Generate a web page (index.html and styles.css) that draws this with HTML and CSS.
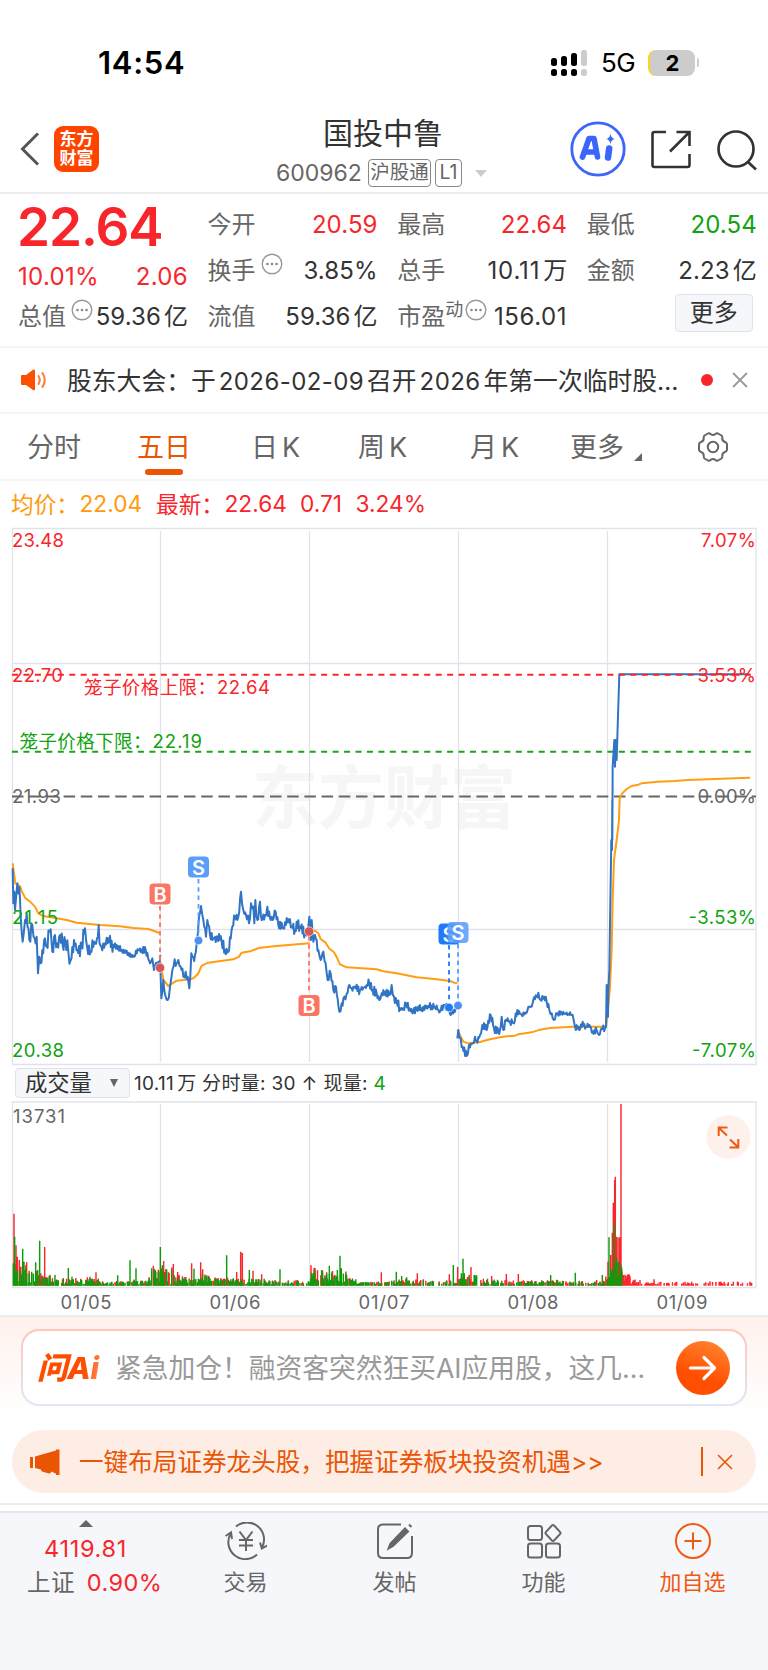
FILE: index.html
```html
<!DOCTYPE html>
<html lang="zh-CN">
<head>
  <meta charset="UTF-8" />
  <title>国投中鲁 600962</title>
  <link rel="stylesheet" href="styles.css">
</head>
<body>

  <!-- 状态栏 -->
  <div class="status-bar">
    <span class="time">14:54</span>
    <svg class="signal" width="38" height="28" viewBox="0 0 38 28">
      <g fill="#000">
        <rect x="0" y="9" width="6" height="8" rx="2.5"/><rect x="10" y="7" width="6" height="10" rx="2.5"/><rect x="20" y="4" width="6" height="13" rx="2.5"/>
        <rect x="0" y="20" width="6" height="7" rx="2.5"/><rect x="10" y="20" width="6" height="7" rx="2.5"/><rect x="20" y="20" width="6" height="7" rx="2.5"/>
      </g>
      <g fill="#ccc"><rect x="30" y="1" width="6" height="16" rx="2.5"/><rect x="30" y="20" width="6" height="7" rx="2.5"/></g>
    </svg>
    <span class="net">5G</span>
    <div class="battery">2</div>
    <div class="battery-cap"></div>
  </div>

  <!-- 顶部标题 -->
  <div class="top-header">
    <svg class="back" width="20" height="34" viewBox="0 0 20 34"><path d="M18 1.5 2.5 17 18 32.500" fill="none" stroke="#555" stroke-width="3"/></svg>
    <div class="logo">东方<br>财富</div>
    <div class="stock">
      <div class="name">国投中鲁</div>
      <div class="code"><span class="num">600962</span><span class="badge">沪股通</span><span class="badge l1">L1</span><i class="down"></i></div>
    </div>
    <svg class="ai" width="56" height="56" viewBox="0 0 56 56">
      <circle cx="28" cy="28" r="26.200" fill="none" stroke="#3a66fb" stroke-width="2.800"/>
      <path d="M12.500 36 19 17.500h5L27.500 36M16.500 31h10" fill="none" stroke="#3a66fb" stroke-width="5.600" stroke-linejoin="round" stroke-linecap="round"/>
      <path d="M39.200 27.500 38 36.500" stroke="#3a66fb" stroke-width="6.500" stroke-linecap="round"/>
      <path d="M40.500 12.500Q41 17.300 45 18 41 18.700 40.500 23.500 40 18.700 36 18 40 17.300 40.500 12.500Z" fill="#3a66fb"/>
    </svg>
    <svg class="share" width="42" height="42" viewBox="0 0 42 42" fill="none" stroke="#333" stroke-width="2.600">
      <path d="M16 3H4.500Q2.500 3 2.500 5V36Q2.500 38 4.500 38H37.500Q39.500 38 39.500 36V25M26.500 3H39.500V17M39 3.500 20 22.500"/>
    </svg>
    <svg class="search" width="42" height="42" viewBox="0 0 42 42" fill="none" stroke="#333" stroke-width="2.700">
      <circle cx="20" cy="20" r="17.500"/><path d="M32 33 40 40.500"/>
    </svg>
  </div>

  <!-- 行情数据 -->
  <div class="quote">
    <div class="col first">
      <div class="price">22.64</div>
      <div class="row chg"><span>10.01%</span><span>2.06</span></div>
      <div class="row"><span class="label">总值</span><svg class="dots" viewBox="0 0 22 22"><use href="#more"/></svg><b>59.36<em>亿</em></b></div>
    </div>
    <div class="col">
      <div class="row"><span class="label">今开</span><b class="red n">20.59</b></div>
      <div class="row"><span class="label">换手</span><svg class="dots gap" viewBox="0 0 22 22"><use href="#more"/></svg><b class="n">3.85%</b></div>
      <div class="row"><span class="label">流值</span><b>59.36<em>亿</em></b></div>
    </div>
    <div class="col">
      <div class="row"><span class="label">最高</span><b class="red n">22.64</b></div>
      <div class="row"><span class="label">总手</span><b class="lot">10.11<em>万</em></b></div>
      <div class="row"><span class="label">市盈<sup>动</sup></span><svg class="dots pe" viewBox="0 0 22 22"><use href="#more"/></svg><b class="n pe-num">156.01</b></div>
    </div>
    <div class="col">
      <div class="row"><span class="label">最低</span><b class="green n">20.54</b></div>
      <div class="row"><span class="label">金额</span><b>2.23<em>亿</em></b></div>
      <div class="row"><button class="more-btn">更多</button></div>
    </div>
  </div>

  <!-- 公告 -->
  <div class="notice">
    <svg width="26" height="22" viewBox="0 0 26 22">
      <path d="M0 7Q0 6 1 6H5L12 .8Q14 0 14 2V20Q14 22 12 21L5 16H1Q0 16 0 15Z" fill="#ff4e00"/>
      <path d="M17.500 7Q20 11 17.500 15M21.500 4Q26 11 21.500 18" fill="none" stroke="#ff7a33" stroke-width="2" stroke-linecap="round"/>
    </svg>
    <div class="notice-text">股东大会：于<i>2026-02-09</i>召开<i>2026</i>年第一次临时股…</div>
    <div class="dot"></div>
    <svg class="close" width="16" height="16" viewBox="0 0 16 16"><path d="M1 1 15 15M15 1 1 15" stroke="#999" stroke-width="1.800"/></svg>
  </div>

  <!-- 周期切换 -->
  <div class="tabs">
    <span>分时</span>
    <span class="active">五日</span>
    <span>日<i>K</i></span>
    <span>周<i>K</i></span>
    <span>月<i>K</i></span>
    <span class="more">更多</span>
    <svg width="32" height="32" viewBox="0 0 32 32" fill="none" stroke="#666" stroke-width="2">
      <path d="M11 2.500Q12.500 2 13.500 3 16 5 18.500 3 19.500 2 21 2.500L24.500 4.500Q25.500 5.500 25.300 7 25 10 28 11 29.500 11.500 30 13V19Q29.500 20.500 28 21 25 22 25.300 25 25.500 26.500 24.500 27.500L21 29.500Q19.500 30 18.500 29 16 27 13.500 29 12.500 30 11 29.500L7.500 27.500Q6.500 26.500 6.700 25 7 22 4 21 2.500 20.500 2 19V13Q2.500 11.500 4 11 7 10 6.700 7 6.500 5.500 7.500 4.500Z" stroke-linejoin="round"/>
      <circle cx="16" cy="16" r="5.200"/>
    </svg>
  </div>

  <div class="avg-line">
    <span class="orange n0">均价：</span><span class="orange n1">22.04</span>
    <span class="red n0">最新：</span><span class="red n2">22.64</span><span class="red n3">0.71</span><span class="red">3.24%</span>
  </div>

  <!-- 五日走势图 -->
  <svg class="chart" id="chart" width="768" height="540" viewBox="0 526 768 540">
    <text class="watermark" x="252" y="823" textLength="264" lengthAdjust="spacingAndGlyphs">东方财富</text>
    <g class="grid">
      <path d="M12.500 528.500H756V1064.500H12.500Z"/>
      <path d="M12 663.500H756M12 929.500H756M160.500 531V1062M309.500 531V1062M458.500 531V1062M607.500 531V1062"/>
    </g>
    <path d="M12 796.500H756" stroke="#666" stroke-width="1.800" stroke-dasharray="11.500 5.700"/>
    <path d="M12 751.800H752" stroke="#18a518" stroke-width="2" stroke-dasharray="6 5.450"/>
    <g transform="translate(0 800) scale(.33333)" fill="none" stroke-linejoin="round">
      <path id="avg" stroke="#ff9d13" stroke-width="6"/>
      <path id="price" stroke="#3274c4" stroke-width="6"/>
    </g>
    <path d="M12 674.700H752" stroke="#f8262b" stroke-width="2" stroke-dasharray="6 5.450"/>
    <g class="axis">
      <text class="red" x="12" y="547" textLength="52">23.48</text>
      <text class="red" x="12" y="681.500" textLength="51">22.70</text>
      <text class="gray" x="12" y="802.500" textLength="49">21.93</text>
      <text class="green" x="12" y="923.500" textLength="46">21.15</text>
      <text class="green" x="12" y="1057" textLength="52">20.38</text>
      <text class="red" x="701" y="547" textLength="55">7.07%</text>
      <text class="red" x="697.500" y="681.500" textLength="58.500">3.53%</text>
      <text class="gray" x="697.500" y="802.500" textLength="58.500">0.00%</text>
      <text class="green" x="688.500" y="923.500" textLength="67.500">-3.53%</text>
      <text class="green" x="692" y="1057" textLength="64">-7.07%</text>
      <text class="red" x="84" y="693.500" textLength="132">笼子价格上限：</text>
      <text class="red" x="217" y="693.500" textLength="53">22.64</text>
      <text class="green" x="19.500" y="747.500" textLength="132">笼子价格下限：</text>
      <text class="green" x="152.500" y="747.500" textLength="49.500">22.19</text>
    </g>
    <!-- 买卖点 -->
    <g class="mark buy">
      <path d="M160 906V962"/><circle cx="160" cy="967.800" r="4.700"/><rect x="149.500" y="883.500" width="21" height="21" rx="4"/><text x="160" y="901.500">B</text>
      <path d="M309 936V994"/><circle cx="309" cy="931.500" r="4.700"/><rect x="298.500" y="995" width="21" height="21" rx="4"/><text x="309" y="1013">B</text>
    </g>
    <g class="mark sell">
      <path d="M198.500 879V936"/><circle cx="198.500" cy="940.500" r="4.300"/><rect x="188" y="856.500" width="21" height="21" rx="4"/><text x="198.500" y="874.500">S</text>
      <g class="deep"><path d="M449 945V1003"/><circle cx="449" cy="1007.500" r="4.300"/><rect x="438.500" y="923.500" width="21" height="21" rx="4"/><text x="449" y="941.500">S</text></g>
      <path d="M458 944V1001"/><circle cx="458" cy="1005.500" r="4.300"/><rect class="over" x="447.500" y="922" width="21" height="21" rx="4"/><text x="458" y="940">S</text>
    </g>
  </svg>

  <!-- 成交量 -->
  <div class="vol-head">
    <div class="select">成交量<i></i></div>
    <div class="vol-info">10.11<em>万</em> 分时量: 30 ↑ 现量: <b class="green">4</b></div>
  </div>
  <svg class="volume" id="volume" width="768" height="215" viewBox="0 1100 768 215">
    <g class="grid">
      <path d="M12.500 1102H756V1287.500H12.500Z"/>
      <path d="M160.500 1104V1286M309.500 1104V1286M458.500 1104V1286M607.500 1104V1286"/>
    </g>
    <g transform="translate(0 1060) scale(.33333)" stroke-width="4.300">
      <path id="volUp" stroke="#f8262b"/>
      <path id="volDown" stroke="#0a9c0a"/>
    </g>
    <g class="axis">
      <text class="gray" x="13" y="1122.500" textLength="52">13731</text>
      <text class="gray" x="60.500" y="1308.500" textLength="51">01/05</text>
      <text class="gray" x="209.500" y="1308.500" textLength="51">01/06</text>
      <text class="gray" x="358.500" y="1308.500" textLength="51">01/07</text>
      <text class="gray" x="507.500" y="1308.500" textLength="51">01/08</text>
      <text class="gray" x="656.500" y="1308.500" textLength="51">01/09</text>
    </g>
    <circle cx="728.500" cy="1137" r="22" fill="#fef0ea"/>
    <path d="M718.700 1136V1127.500H727.500M719 1128 727 1135.500M738.300 1139V1147.500H729.500M738 1147 730 1139.500" fill="none" stroke="#f0590f" stroke-width="2"/>
  </svg>

  <!-- 问Ai -->
  <div class="ask">
    <div class="ask-box">
      <div class="ask-logo">问Ai</div>
      <div class="ask-text">紧急加仓！融资客突然狂买AI应用股，这几…</div>
      <div class="go"><svg width="30" height="26" viewBox="0 0 30 26"><path d="M2.500 13H26M16 2.500 26.500 13 16 23.500" fill="none" stroke="#fff" stroke-width="3.200" stroke-linecap="round" stroke-linejoin="round"/></svg></div>
    </div>
    <div class="banner">
      <svg width="30" height="26" viewBox="0 0 30 26" fill="#ea5504"><path d="M0 8H3V19H0ZM5 7.500 26 1.500V.5H29.500V26H26V24.500L21 22.500V23.500Q20.500 24.500 19 24.500L12 22.500Q11 22 11 20.500L5 19Z"/></svg>
      <div class="banner-text">一键布局证券龙头股，把握证券板块投资机遇&gt;&gt;</div>
      <div class="bar"></div>
      <svg class="x" width="16" height="16" viewBox="0 0 16 16"><path d="M1 1 15 15M15 1 1 15" stroke="#ea5504" stroke-width="1.600"/></svg>
    </div>
  </div>

  <!-- 底部导航 -->
  <div class="bottom-nav">
    <div class="index">
      <i class="up"></i>
      <div class="point">4119.81</div>
      <div class="pct">上证 <span>0.90%</span></div>
    </div>
    <div class="item">
      <svg width="42" height="38" viewBox="0 0 42 38" fill="none" stroke="#666" stroke-width="2">
        <path d="M11 4.500A17 17 0 0 1 37 25.500M32 32.500A17 17 0 0 1 6 11M.5 14 6 10.500 7 17M35 20.500 36.800 26.500 42 23.500"/>
        <path d="M14.500 9.500 21 18 27.500 9.500M21 18V29M14 18H28M14 23.500H28"/>
      </svg>
      <span>交易</span>
    </div>
    <div class="item">
      <svg width="38" height="38" viewBox="0 0 38 38" fill="none" stroke="#666" stroke-width="2">
        <path d="M25 2.500H7Q2 2.500 2 7.500V31Q2 36 7 36H31Q36 36 36 31V14"/>
        <path d="M29 6.500 32 9.500 17 24 12.500 26.500 14.500 21.500ZM33 2.500 35.500 5" fill="#666"/>
      </svg>
      <span>发帖</span>
    </div>
    <div class="item">
      <svg width="36" height="38" viewBox="0 0 36 38" fill="none" stroke="#666" stroke-width="2">
        <rect x="2" y="4" width="14" height="14" rx="2.500"/><rect x="2" y="21.500" width="14" height="14" rx="2.500"/><rect x="20" y="21.500" width="14" height="14" rx="2.500"/>
        <path d="M25.900 3.500Q27 2.500 28.100 3.500L34 9.900Q35 11 34 12.100L28.100 18.500Q27 19.500 25.900 18.500L20 12.100Q19 11 20 9.900Z"/>
      </svg>
      <span>功能</span>
    </div>
    <div class="item add">
      <svg width="38" height="38" viewBox="0 0 38 38" fill="none" stroke="#f0590f" stroke-width="2"><circle cx="19" cy="19" r="17"/><path d="M10.500 19H27.500M19 10.500V27.500"/></svg>
      <span>加自选</span>
    </div>
  </div>

  <!-- 三点图标 -->
  <svg class="defs" width="0" height="0">
    <symbol id="more" viewBox="0 0 22 22">
      <circle cx="11" cy="11" r="9.800" fill="none" stroke="#999" stroke-width="1.400"/>
      <circle cx="6.500" cy="11" r="1.300" fill="#888"/><circle cx="11" cy="11" r="1.300" fill="#888"/><circle cx="15.500" cy="11" r="1.300" fill="#888"/>
    </symbol>
  </svg>

  <script src="chart.js"></script>
</body>
</html>
```
FILE: styles.css
```css
* {
  box-sizing: border-box;
}

body {
  margin: 0;
  width: 768px;
  height: 1670px;
  overflow: hidden;
  font-family: Inter, 'Noto Sans CJK SC', sans-serif;
  color: #333;
  background-color: #fff;
}

i, em, b {
  font-style: normal;
  font-weight: normal;
}

svg {
  display: block;
  flex: none;
}

.red { color: #f8262b; fill: #f8262b; }
.green { color: #0fa30f; fill: #0fa30f; }
.orange { color: #ff9a0c; }
.gray { fill: #666; }

/* 状态栏 */
.status-bar {
  display: flex;
  align-items: center;
  height: 100px;
  padding: 25px 0 0 98px;
  color: #000;
}

.time {
  width: 453px;
  font-size: 31px;
  font-weight: 600;
  letter-spacing: 0.7px;
}

.net {
  width: 59px;
  padding-left: 12px;
  font-size: 26px;
  letter-spacing: -0.5px;
}

.battery {
  width: 47px;
  height: 26px;
  border-left: 2px solid #ffd21f;
  border-radius: 8px;
  background: #ccc;
  font-size: 22px;
  line-height: 26px;
  font-weight: 700;
  text-align: center;
}

.battery-cap {
  width: 2px;
  height: 9px;
  margin-left: 2px;
  background: #ccc;
  border-radius: 0 3px 3px 0;
}

/* 标题 */
.top-header {
  display: flex;
  align-items: center;
  height: 94px;
  padding-left: 20px;
  border-bottom: 2px solid #ededed;
}

.back {
  margin-top: 6px;
}

.logo {
  width: 45px;
  height: 46px;
  margin: 6px 0 0 14px;
  padding-top: 4px;
  border-radius: 9px;
  background: #ff4400;
  color: #fff;
  font-size: 17px;
  line-height: 19px;
  font-weight: 700;
  text-align: center;
}

.stock {
  width: 343px;
  margin-left: 103px;
  padding: 8px 0 0 73px;
}

.name {
  padding-left: 48px;
  font-size: 30px;
  line-height: 42px;
  white-space: nowrap;
}

.code {
  display: flex;
  align-items: center;
  height: 30px;
  margin-top: 4px;
  color: #666;
  font-size: 23px;
}

.code .num {
  width: 93px;
  padding-left: 1px;
}

.badge {
  height: 28px;
  width: 63px;
  margin-right: 4px;
  border: 1.500px solid #888;
  border-radius: 4px;
  font-size: 19.500px;
  line-height: 25px;
  text-align: center;
  white-space: nowrap;
}

.badge.l1 {
  width: 27px;
}

.down {
  margin-left: 9px;
  border: 6px solid transparent;
  border-top: 7px solid #ccc;
  border-bottom: 0;
}

.ai {
  margin: 6px 0 0 25px;
}

.share {
  margin: 7px 0 0 24px;
}

.search {
  margin: 7px 0 0 24px;
}

/* 行情 */
.quote {
  display: flex;
  gap: 19.600px;
  height: 154px;
  padding: 5px 11px 0 18px;
  border-bottom: 2px solid #f5f5f5;
}

.col {
  width: 170px;
}

.row {
  display: flex;
  align-items: center;
  height: 46px;
  font-size: 24px;
  white-space: nowrap;
}

.row b {
  margin-left: auto;
  letter-spacing: 0.1px;
}

.row .n {
  padding-top: 4px;
}

.row .pe-num {
  letter-spacing: 0.6px;
}

.row .lot {
  letter-spacing: 0.8px;
}

.row em {
  margin-left: 3px;
  letter-spacing: 0;
}

.label {
  color: #666;
}

.label sup {
  font-size: 18px;
  line-height: 0;
  vertical-align: 9px;
}

.price {
  height: 57px;
  padding-top: 2px;
  color: #f8262b;
  font-size: 53px;
  line-height: 53px;
  font-weight: 600;
  letter-spacing: -1px;
  text-indent: -1px;
}

.chg {
  justify-content: space-between;
  height: 35px;
  padding-top: 6px;
  color: #f8262b;
  letter-spacing: 0.3px;
}

.dots {
  width: 22px;
  height: 22px;
  margin: -9px 0 0 5px;
}

.first .dots {
  margin-right: -6px;
}

.dots.pe {
  margin-left: 2px;
}

.more-btn {
  width: 78px;
  height: 38px;
  margin: -2px 4px 0 auto;
  padding: 0;
  border: 1.500px solid #dfe2e8;
  border-radius: 4px;
  background: #f6f7fa;
  color: #333;
  font: inherit;
  line-height: 34px;
}

/* 公告 */
.notice {
  display: flex;
  align-items: center;
  height: 66px;
  padding: 0 20px 0 21px;
  border-bottom: 2px solid #f5f5f5;
}

.notice-text {
  width: 632px;
  padding: 0 0 2px 20px;
  font-size: 24.800px;
  white-space: nowrap;
}

.notice-text i {
  margin: 0 3px;
  font-size: 24px;
  letter-spacing: 0.4px;
}

.dot {
  width: 12px;
  height: 12px;
  margin-left: 22px;
  border-radius: 50%;
  background: #f8262b;
}

.close {
  margin-left: 19px;
}

/* tab */
.tabs {
  display: flex;
  align-items: center;
  height: 67px;
  padding-left: 27px;
  border-bottom: 2px solid #f5f5f5;
  color: #666;
  font-size: 27px;
}

.tabs span {
  position: relative;
  width: 110px;
  padding-top: 2px;
  line-height: 40px;
}

.tabs span i {
  margin-left: 4px;
}

.tabs .active {
  width: 114px;
  color: #ea5504;
}

.tabs span:nth-child(3) { width: 107px; }
.tabs span:nth-child(4) { width: 112px; }
.tabs span:nth-child(5) { width: 100px; }
.tabs .more { width: 127px; }

.tabs .active::after {
  content: '';
  position: absolute;
  left: 8px;
  top: 43px;
  width: 38px;
  height: 6px;
  border-radius: 3px;
  background: #ea5504;
}

.tabs .more::after {
  content: '';
  position: absolute;
  left: 64px;
  top: 27px;
  border-left: 8px solid transparent;
  border-bottom: 8px solid #666;
}

.avg-line {
  display: flex;
  align-items: center;
  height: 45px;
  padding: 0 0 0 11px;
  font-size: 22.700px;
  white-space: nowrap;
}

.n0 { width: 68.500px; }
.n1 { width: 76.500px; }
.n2 { width: 75.500px; }
.n3 { width: 55.500px; }

/* 图表 */
.grid {
  fill: none;
  stroke: #e1e3ec;
  stroke-width: 1.300;
}

.axis {
  font-size: 18.500px;
}

.watermark {
  fill: #f6f6f6;
  font-size: 69px;
  font-weight: 700;
}

.mark {
  --c: #fb7565;
  --d: #d85656;
}

.mark.sell {
  --c: #5a9dfb;
  --d: #4b90f5;
}

.mark .deep {
  --c: #1f7af8;
  --d: #1f7af8;
}

.mark path {
  stroke: var(--c);
  stroke-width: 1.800;
  stroke-dasharray: 4.500 3.800;
}

.mark rect { fill: var(--c); }

.mark .over { fill-opacity: .88; }

.mark circle {
  fill: var(--d);
  stroke: #fff;
  stroke-opacity: .6;
  stroke-width: 1;
}

.mark text {
  fill: #fff;
  font-size: 20px;
  font-weight: 600;
  text-anchor: middle;
}

.vol-head {
  display: flex;
  align-items: center;
  height: 34px;
  padding-left: 15px;
}

.select {
  display: flex;
  align-items: center;
  width: 115px;
  height: 30px;
  padding-left: 9px;
  border: 1.500px solid #dfe2e8;
  border-radius: 4px;
  background: #f6f7fa;
  font-size: 22.300px;
  line-height: 26px;
}

.select i {
  margin-left: 18px;
  border: 4.500px solid transparent;
  border-top: 8px solid #666;
  border-bottom: 0;
}

.vol-info {
  padding: 2px 0 0 4px;
  font-size: 19px;
  line-height: 28px;
  letter-spacing: 0.32px;
  white-space: pre;
}

.vol-info em {
  margin-left: 3px;
}

/* 问Ai */
.ask {
  height: 190px;
  padding-top: 12px;
  border-top: 2px solid #ececf0;
  border-bottom: 2px solid #ececec;
  background: linear-gradient(#fff1ec, #fff 100px);
}

.ask-box {
  display: flex;
  align-items: center;
  height: 77px;
  margin: 0 21px;
  padding: 0 15px 0 14px;
  border: 2px solid transparent;
  border-radius: 18px;
  background: linear-gradient(#fff, #fff) padding-box, linear-gradient(#ffc5b9, #dfe7f8) border-box;
}

.ask-logo {
  width: 78px;
  padding-bottom: 4px;
  background: linear-gradient(100deg, #ff4d00 60%, #ff9a6a 85%);
  background-clip: text;
  color: transparent;
  font-size: 30.500px;
  font-weight: 800;
  font-style: italic;
  letter-spacing: -0.3px;
  white-space: nowrap;
}

.ask-text {
  width: 562px;
  padding-bottom: 2px;
  color: #999;
  font-size: 26.750px;
  white-space: nowrap;
}

.go {
  display: flex;
  align-items: center;
  justify-content: center;
  width: 54px;
  height: 54px;
  border-radius: 50%;
  background: linear-gradient(200deg, #ff8a35, #ff4e00 65%);
  flex: none;
}

.banner {
  display: flex;
  align-items: center;
  height: 63px;
  margin: 24px 12px 0;
  padding-left: 18px;
  border-radius: 32px;
  background: #feede5;
  color: #ea5504;
}

.banner-text {
  width: 641px;
  padding: 0 0 3px 19px;
  font-size: 24.600px;
  white-space: nowrap;
}

.bar {
  width: 1.500px;
  height: 29px;
  background: #ea5504;
}

.x {
  margin-left: 14px;
}

/* 底部导航 */
.bottom-nav {
  display: flex;
  height: 159px;
  margin-top: 6px;
  border-top: 2px solid #e6e7ea;
  background: #f6f7fa;
  color: #666;
  font-size: 22px;
}

.index {
  width: 171px;
  padding-top: 7px;
  color: #f8262b;
  font-size: 23.500px;
}

.up {
  display: block;
  width: 0;
  margin-left: 79px;
  border: 7px solid transparent;
  border-bottom: 7px solid #666;
  border-top: 0;
}

.point {
  margin: 7px 0 0 44px;
  line-height: 30px;
  letter-spacing: 0.7px;
}

.pct {
  padding-left: 27px;
  line-height: 38px;
  letter-spacing: 0.4px;
  color: #666;
  white-space: nowrap;
}

.pct span {
  margin-left: 5px;
  color: #f8262b;
}

.item {
  display: flex;
  flex-direction: column;
  align-items: center;
  width: 149px;
  padding: 9px 0 0;
}

.item span {
  margin-top: 5px;
  line-height: 34px;
}

.item.add {
  color: #f0590f;
}

.defs {
  position: absolute;
}
```
FILE: chart.js
```js
// 固定随机数，保证每次画出的毛刺一致
let seed = 7;
function rnd() {
  seed = (seed * 16807) % 2147483647;
  return seed / 2147483647;
}

// 每一段: x0 偏移, amp 毛刺幅度, p 为 x y 序列 (1/3 像素)
const price = [
  { x0: 0, amp: 24, p: '38 205 40 310 43 275 45 330 52 250 58 262 60 295 62 350 68 425 75 360 80 340 88 420 97 375 104 415 110 410 114 520 118 470 122 490 127 450 135 415 140 440 148 395 152 388 157 455 165 405 172 430 180 405 188 435 196 425 205 455 212 480 222 420 232 450 245 440 255 385 262 445 272 455 285 430 291 415 296 375 301 435 304 440 315 430 325 415 340 435' },
  { x0: 0, amp: 9, join: true, p: '340 435 365 450 385 458 403 470 415 450 437 450 450 490 457 475 462 510 470 488 478 495 481 465' },
  { x0: 0, amp: 14, p: '481 500 484 595 490 540 497 590 503 600 510 560 517 510 524 478 530 490 535 480 542 500 550 530 557 515 563 530 568 565 574 460 580 472 585 465 590 430 597 350 603 318 610 360 618 410 622 360 630 405 640 415 652 410 665 425 675 450 685 455 697 380 705 350 715 350 723 275 730 330 738 345 747 370 753 310 760 320' },
  { x0: 750, amp: 16, join: true, p: '10 320 13 370 16 300 22 360 30 305 35 360 45 345 52 320 60 355 68 360 77 335 85 375 100 385 115 358 125 380 135 390 140 365 150 380 165 400 172 408' },
  { x0: 750, amp: 13, p: '172 408 178 350 183 420 185 360 190 425 195 405 205 450 212 480 220 455 227 490 233 540 242 520 250 570 258 560 268 635 275 610 283 590 290 580 298 555 305 565 315 560 330 570 345 560 358 550 368 570 380 580 388 600 395 580 405 575 418 585 425 555 432 590 440 605 450 625' },
  { x0: 750, amp: 10, join: true, p: '450 625 460 625 468 610 487 640 500 625 515 625 535 618 555 622 570 635 580 615 597 622 602 645 612 630 622 620' },
  { x0: 750, amp: 13, p: '622 715 625 690 632 715 638 740 650 768 657 735 668 730 675 710 680 725 690 705 697 675 710 690 722 645 732 685 745 690 750 690' },
  { x0: 1500, amp: 9, join: true, p: '0 690 5 650 10 690 18 660 30 665 42 670 52 630 65 645 78 640 85 620 95 620 102 592 110 590 115 578 122 600 132 590 140 605 148 630 155 640 162 660 168 640 185 640 205 642 218 645 225 680 238 690 248 665 258 680 268 675 278 695 290 690 297 705 305 685 315 685 318 680' },
  { x0: 1500, amp: 0, join: true, p: '318 680 320 555 321 650 323 555 324 650 325 570 328 510 331 310 334 120 336 150 337 0' },
  { x0: 1104, amp: 0, join: true, p: '733 0 733 120 734 -100 739 -180 741 -100 743 -180 746 -120 749 -220 754 -377 1145 -377' }
];

const avg = [
  { x0: 0, p: '38 190 46 250 60 258 66 275 75 293 90 305 105 320 115 340 130 348 200 360 230 368 300 375 360 379 400 384 445 387 462 393 478 399' },
  { x0: 0, p: '481 485 490 540 505 558 517 550 530 542 570 538 580 535 594 522 605 497 625 488 700 478 717 470 725 458 750 454 780 443 830 438 928 430' },
  { x0: 750, p: '178 395 195 392 205 400 212 417 227 428 237 445 252 457 262 475 270 493 290 502 380 508 400 514 440 520 500 532 560 538 600 543 612 548 622 549' },
  { x0: 750, p: '622 690 640 725 655 730 690 726 720 718 750 712 770 709 795 707 805 703 845 697 870 689 900 684 970 680 1068 680 1072 650 1080 560 1085 450 1088 300 1092 180 1100 120 1107 60 1109 -5 1117 -20 1130 -33 1145 -42 1165 -46 1175 -50 1224 -55 1274 -57 1314 -60 1394 -63 1500 -67' }
];

function toPath(segs) {
  let d = '';
  segs.forEach(s => {
    const n = s.p.split(' ').map(Number);
    let px, py;
    for (let i = 0; i < n.length; i += 2) {
      const x = n[i] + s.x0, y = n[i + 1];
      if (i === 0) {
        d += (s.join ? 'L' : 'M') + x + ' ' + y;
      } else {
        const steps = s.amp ? Math.floor((x - px) / 2.4) : 0;
        for (let k = 1; k < steps; k++) {
          const t = k / steps;
          const j = (k % 2 ? 1 : -1) * rnd() * s.amp * 1.1;
          d += 'L' + (px + (x - px) * t).toFixed(1) + ' ' + (py + (y - py) * t + j).toFixed(1);
        }
        d += 'L' + x + ' ' + y;
      }
      px = x; py = y;
    }
  });
  return d;
}

document.getElementById('price').setAttribute('d', toPath(price));
document.getElementById('avg').setAttribute('d', toPath(avg));

// 成交量: 底量区间 [x, 高度]
const base = [[38, 60], [80, 45], [125, 30], [150, 22], [200, 18], [260, 22], [300, 10], [400, 14], [440, 25], [462, 50], [500, 50], [530, 30], [570, 22], [600, 42], [625, 22], [700, 18], [740, 20], [800, 12], [890, 14], [930, 50], [970, 42], [1020, 46], [1040, 18], [1080, 8], [1160, 16], [1280, 12], [1370, 26], [1400, 34], [1440, 22], [1500, 13], [1600, 13], [1760, 13], [1815, 30], [1825, 60], [1840, 100], [1862, 100], [1868, 30], [1895, 14], [1930, 8], [2250, 4]];
const up = '42 461 48 556 52 590 58 600 80 607 134 561 262 652 288 637 460 617 491 603 520 612 533 636 575 610 602 607 608 628 628 650 710 636 722 575 727 579 759 632 785 643 933 616 942 630 1144 637 1252 640 1348 643 1373 621 1413 621 1475 648 1519 642 1555 642 1824 605 1832 585 1837 518 1840 428 1844 360 1846 350 1849 530 1854 532 1859 532 1861 555 1863 132 1866 635 1870 645 1920 660 1962 658 2030 665 2148 666';
const down = '40 610 44 530 68 566 72 605 95 635 107 607 113 630 119 542 165 645 205 624 216 650 353 646 390 601 408 625 455 625 466 630 481 561 487 616 500 628 582 626 680 586 748 630 840 628 965 630 988 617 1012 630 1020 587 1024 625 1189 635 1205 648 1220 652 1360 615 1384 640 1389 596 1393 640 1652 645 1726 638 1807 645 1827 532 1842 490 1850 595 1855 605';

function spikes(str) {
  const n = str.split(' ').map(Number);
  let d = '';
  for (let i = 0; i < n.length; i += 2) d += 'M' + n[i] + ' 677V' + n[i + 1];
  return d;
}

let red = '', green = '', b = 0;
for (let x = 40; x < 2256; x += 2.5) {
  while (base[b + 1] && base[b + 1][0] < x) b++;
  const h = 5 + base[b][1] * rnd();
  const bar = 'M' + x + ' 677V' + (677 - h).toFixed(1);
  if (x > 1866) {
    if (x < 1910 || rnd() > 0.55) red += bar;
  } else {
    // 前三天绿柱为主，后两天红绿各半
    if (rnd() > 0.5) red += bar;
    if (rnd() > (x < 1100 ? 0.3 : 0.5)) green += 'M' + x + ' 677V' + (677 - h * 0.85).toFixed(1);
  }
}
document.getElementById('volUp').setAttribute('d', red + spikes(up));
document.getElementById('volDown').setAttribute('d', green + spikes(down));
```
